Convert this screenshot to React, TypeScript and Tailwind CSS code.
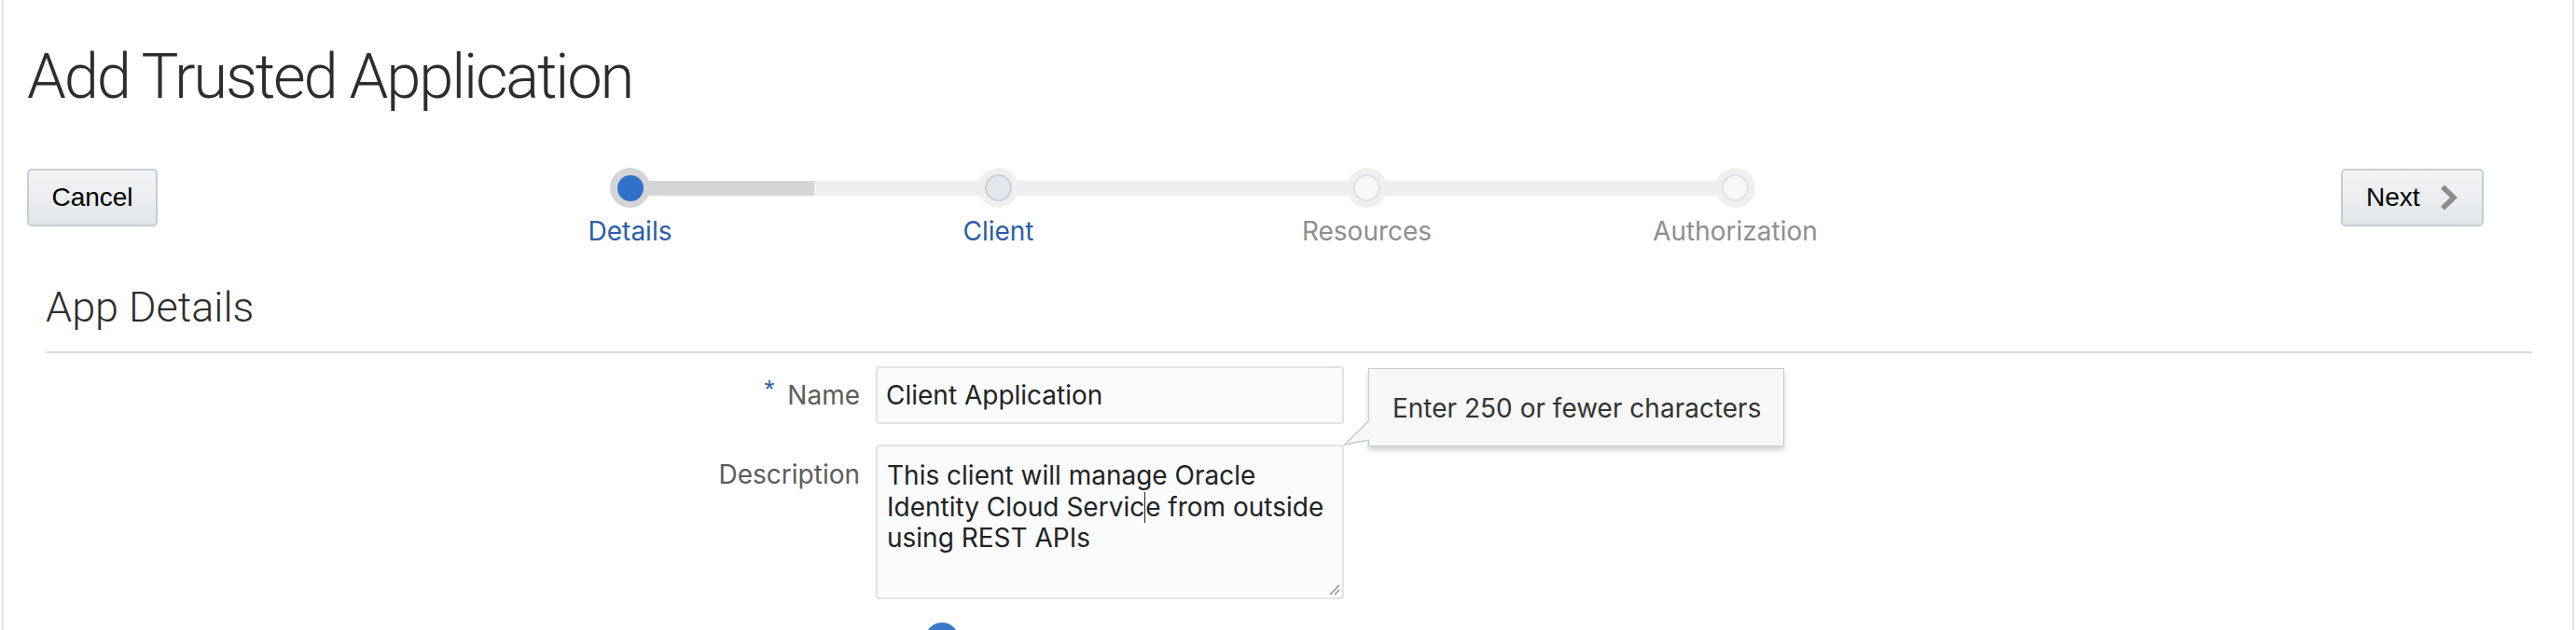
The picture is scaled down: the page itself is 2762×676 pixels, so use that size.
import React from "react";

const SF = { fontFamily: "Inter, 'Noto Sans', sans-serif" } as React.CSSProperties;
const HEL = { fontFamily: "'Liberation Sans', Arial, sans-serif" } as React.CSSProperties;
const LIGHT = { fontFamily: "Roboto, 'Liberation Sans', sans-serif" } as React.CSSProperties;

type Step = { label: string; state: "current" | "visited" | "todo" };
const steps: Step[] = [
  { label: "Details", state: "current" },
  { label: "Client", state: "visited" },
  { label: "Resources", state: "todo" },
  { label: "Authorization", state: "todo" },
];

function StepDot({ state }: { state: Step["state"] }) {
  if (state === "current") {
    return (
      <div className="w-[43px] h-[43px] rounded-full bg-[#d4d5d7] flex items-center justify-center">
        <div className="w-[28px] h-[28px] rounded-full bg-[#3071c9]" />
      </div>
    );
  }
  if (state === "visited") {
    return (
      <div className="w-[43px] h-[43px] rounded-full bg-[#efefef] flex items-center justify-center">
        <div className="w-[29px] h-[29px] rounded-full bg-[#e3e6ea] border-2 border-[#c9d0d7]" />
      </div>
    );
  }
  return (
    <div className="w-[43px] h-[43px] rounded-full bg-[#efefef] flex items-center justify-center">
      <div className="w-[29px] h-[29px] rounded-full bg-[#f6f7f8] border-2 border-[#dde1e5]" />
    </div>
  );
}

function Stepper() {
  return (
    <div className="relative flex ml-[309px]">
      <div className="absolute left-[197px] top-[14px] h-[16px] w-[1186px] bg-[#efefef]">
        <div className="h-full w-[198px] bg-[#d4d5d7]" />
      </div>
      {steps.map((s) => (
        <div key={s.label} className="relative w-[395px] flex flex-col items-center">
          <StepDot state={s.state} />
          <div
            style={SF}
            className={
              "mt-[8px] text-[28px] leading-[34px] " +
              (s.state === "todo" ? "text-[#8e8e8e]" : "text-[#2b5ca8]")
            }
          >
            {s.label}
          </div>
        </div>
      ))}
    </div>
  );
}

export default function App() {
  return (
    <div className="w-[2762px] h-[676px] overflow-hidden bg-white">
      <div className="mx-[2px] h-full border-x-2 border-[#e2e6eb] pl-[25px]">
        <h1
          style={LIGHT}
          className="pt-[49px] text-[67px] leading-[67px] font-light text-[#2d2d2d] tracking-[-2.2px]"
        >
          Add Trusted Application
        </h1>

        <div className="mt-[64px] flex items-start">
          <button
            style={HEL}
            className="mt-[1px] w-[140px] h-[62px] rounded-[5px] border-2 border-[#c6cdd4] bg-gradient-to-b from-[#f2f3f5] to-[#e3e6e9] text-[28px] text-black"
          >
            Cancel
          </button>
          <Stepper />
          <button
            style={HEL}
            className="ml-auto mr-[95px] mt-[1px] w-[153px] h-[62px] rounded-[5px] border-2 border-[#c6cdd4] bg-gradient-to-b from-[#f2f3f5] to-[#e3e6e9] flex items-center pl-[25px] text-[28px] text-black"
          >
            <span>Next</span>
            <svg className="ml-[20px]" width="20" height="28" viewBox="0 0 20 28">
              <polyline points="4,2.5 16,14 4,25.5" fill="none" stroke="#8b8b8b" strokeWidth="5.5" />
            </svg>
          </button>
        </div>

        <div className="ml-[20px] mr-[43px]">
          <h2
            style={LIGHT}
            className="mt-[42px] pb-[25px] border-b-2 border-[#d9dde3] text-[45px] leading-[45px] font-light text-[#2d2d2d]"
          >
            App Details
          </h2>

          <div className="mt-[14px] flex items-center">
            <div style={SF} className="w-[890px] pr-[17px] text-right text-[28px] text-[#5c5c5c]">
              <span style={HEL} className="relative -top-[7px] mr-[14px] text-[28px] text-[#2b5ca8]">*</span>
              Name
            </div>
            <div className="relative">
              <div
                style={SF}
                className="w-[502px] h-[62px] rounded-[4px] border-2 border-[#e0e3e7] bg-[#fafbfd] pl-[9px] flex items-center text-[28px] text-[#222]"
              >
                Client Application
              </div>
              <div className="absolute left-[528px] top-[2px] w-[446px] h-[84px] bg-[#f7f7f7] border border-[#c5ccd4] shadow-[0_4px_5px_rgba(0,0,0,0.18)] pl-[25px] pt-[25px]">
                <svg
                  className="absolute -left-[28px] top-[53px]"
                  width="30"
                  height="32"
                  viewBox="0 0 30 32"
                >
                  <polygon points="28,2 2,28 28,23" fill="#f7f7f7" />
                  <polyline points="28,2 2,28 28,23" fill="none" stroke="#c5ccd4" strokeWidth="1.5" />
                </svg>
                <div style={SF} className="relative text-[28px] leading-[34px] text-[#333] whitespace-nowrap">
                  Enter 250 or fewer characters
                </div>
              </div>
            </div>
          </div>

          <div className="mt-[22px] flex items-start">
            <div
              style={SF}
              className="w-[890px] pr-[17px] pt-[16px] text-right text-[28px] leading-[33px] text-[#5c5c5c]"
            >
              Description
            </div>
            <div
              style={SF}
              className="relative w-[502px] h-[166px] rounded-[4px] border-2 border-[#e0e3e7] bg-[#fafbfd] pl-[10px] pt-[15px] text-[28px] leading-[33.5px] text-[#222] whitespace-nowrap"
            >
              <div>This client will manage Oracle</div>
              <div>
                Identity Cloud Servic
                <span className="inline-block align-top w-0 h-[33px] border-l border-[#222]" />
                e from outside
              </div>
              <div>using REST APIs</div>
              <svg className="absolute right-[2px] bottom-[2px]" width="14" height="14" viewBox="0 0 14 14">
                <line x1="13" y1="3" x2="3" y2="13" stroke="#8a8a8a" strokeWidth="1.2" />
                <line x1="13" y1="8" x2="8" y2="13" stroke="#8a8a8a" strokeWidth="1.2" />
              </svg>
            </div>
          </div>

          <div className="mt-[25px] ml-[943px] w-[36px] h-[36px] rounded-full bg-[#3a78c9]" />
        </div>
      </div>
    </div>
  );
}
